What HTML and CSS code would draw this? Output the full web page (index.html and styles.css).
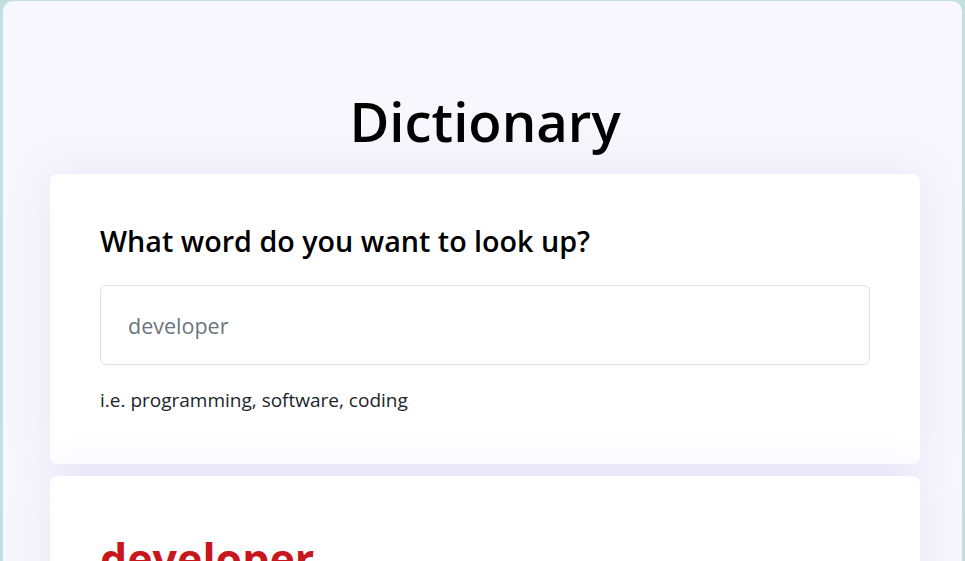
FILE: index.html
```html
<!DOCTYPE html>
<html lang="en">
<head>
<meta charset="utf-8">
<title>Dictionary</title>
<link rel="stylesheet" href="styles.css">
</head>
<body>
<div class="app">
  <h1 class="title">Dictionary</h1>
  <section class="card search-card">
    <h2 class="search-label">What word do you want to look up?</h2>
    <input class="search-input" type="search" placeholder="developer">
    <p class="hint">i.e. programming, software, coding</p>
  </section>
  <section class="card result-card">
    <h2 class="word">developer</h2>
  </section>
</div>
</body>
</html>
```
FILE: styles.css
```css
* { box-sizing: border-box; }
html, body { height: 100%; }
body {
  margin: 0;
  background: #c3dfe0;
  font-family: "Segoe UI", "Open Sans", sans-serif;
  color: #212529;
  overflow: hidden;
}
.app {
  width: 959px;
  margin: 1px auto 0;
  min-height: 700px;
  background: #f8f7fd;
  border-radius: 10px;
  padding: 84px 0 0 5px;
  display: flex;
  flex-direction: column;
  align-items: center;
}
.title {
  margin: 0 0 17px;
  font-size: 54.5px;
  line-height: 72px;
  font-weight: 600;
  color: #000;
}
.card {
  width: 870px;
  background: #fff;
  border-radius: 7px;
  padding: 50px;
  box-shadow: 0 0 50px rgba(90, 70, 190, 0.1);
  margin-bottom: 12px;
}
.search-label {
  margin: 0 0 27px;
  font-size: 28.7px;
  line-height: 34px;
  font-weight: 600;
  color: #000;
}
.search-input {
  display: block;
  width: 100%;
  height: 80px;
  border: 1px solid #dee2e6;
  border-radius: 6px;
  padding: 0 27px;
  font-family: inherit;
  font-size: 21.5px;
  color: #212529;
  background: #fff;
  outline: none;
}
.search-input::placeholder { color: #6c757d; }
.hint {
  margin: 21px 0 0;
  font-size: 19px;
  line-height: 28px;
}
.result-card { padding-top: 57px; }
.word {
  margin: 0;
  font-size: 43px;
  line-height: 52px;
  font-weight: 700;
  color: #c8161d;
}
```
